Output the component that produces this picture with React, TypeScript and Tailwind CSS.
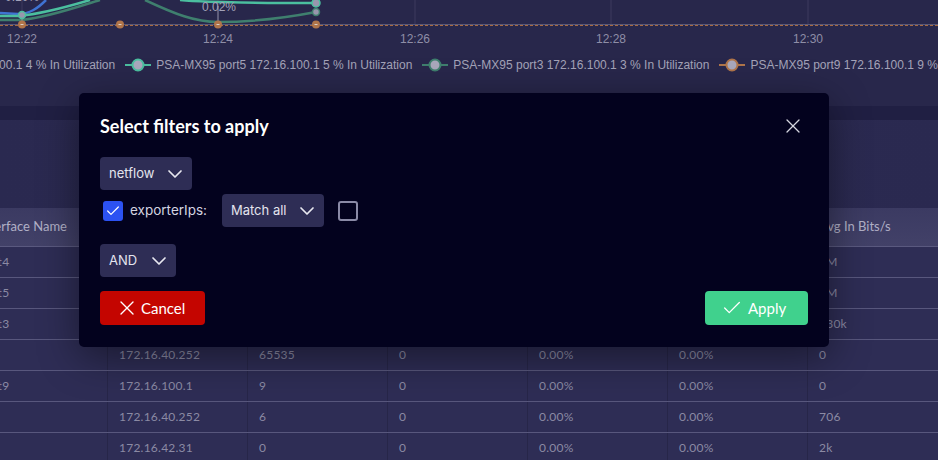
import { Check, ChevronDown, X } from "lucide-react"

const legend = [
  { label: "PSA-MX95 port4 172.16.100.1 4 % In Utilization", color: "#3f73d2" },
  { label: "PSA-MX95 port5 172.16.100.1 5 % In Utilization", color: "#4bbf9f" },
  { label: "PSA-MX95 port3 172.16.100.1 3 % In Utilization", color: "#3f7f6e" },
  { label: "PSA-MX95 port9 172.16.100.1 9 % In Utilization", color: "#b0754a" },
]

const rows = [
  ["port4", "172.16.40.252", "65535", "0", "0.00%", "0.00%", "2M"],
  ["port5", "172.16.100.1", "9", "0", "0.00%", "0.00%", "2M"],
  ["port3", "172.16.40.252", "6", "0", "0.00%", "0.00%", "130k"],
  ["", "172.16.40.252", "65535", "0", "0.00%", "0.00%", "0"],
  ["port9", "172.16.100.1", "9", "0", "0.00%", "0.00%", "0"],
  ["", "172.16.40.252", "6", "0", "0.00%", "0.00%", "706"],
  ["", "172.16.42.31", "0", "0", "0.00%", "0.00%", "2k"],
]

const headers = ["Interface Name", "Exporter IP", "If Index", "In Packets", "In Utilization", "Out Utilization", "Avg In Bits/s"]

function Chart() {
  const xs = [22, 120, 218, 316]
  return (
    <svg width="938" height="50" className="block">
      {[22, 218, 415, 611, 808].map((x) => (
        <line key={x} x1={x} y1="0" x2={x} y2="25" stroke="#3c3b5e" strokeWidth="1" />
      ))}
      <line x1="0" y1="24.5" x2="938" y2="24.5" stroke="#5a5978" strokeWidth="1" />
      <line x1="0" y1="25.5" x2="938" y2="25.5" stroke="#a8693f" strokeWidth="1" strokeDasharray="3 2" />
      <path d="M0 13 L18 14 C30 14 38 8 46 0" fill="none" stroke="#3f73d2" strokeWidth="2.5" />
      <path d="M0 16 L18 16 C40 14 70 6 90 0" fill="none" stroke="#4bbf9f" strokeWidth="2.5" />
      <path d="M180 0 C200 2 240 3 316 3" fill="none" stroke="#4bbf9f" strokeWidth="2.5" />
      <path d="M0 20 L22 20 C50 17 80 6 100 0" fill="none" stroke="#3f7f6e" strokeWidth="2.5" />
      <path d="M145 0 C175 14 195 22 218 22 C260 22 290 17 316 12" fill="none" stroke="#3f7f6e" strokeWidth="2.5" />
      <line x1="218" y1="6" x2="218" y2="21" stroke="#8c8ba4" strokeWidth="1" />
      <line x1="22" y1="12" x2="22" y2="21" stroke="#8c8ba4" strokeWidth="1" />
      <text x="202" y="11" fill="#a3a2b9" fontSize="12" fontFamily="Liberation Sans, Arial, sans-serif">0.02%</text>
      <text x="5" y="1" fill="#a3a2b9" fontSize="12" fontFamily="Liberation Sans, Arial, sans-serif">0.10%</text>
      <circle cx="22" cy="15" r="3.5" fill="#9796ad" stroke="#4bbf9f" strokeWidth="1.5" />
      <circle cx="316" cy="3" r="4" fill="#9796ad" stroke="#4bbf9f" strokeWidth="1.5" />
      <circle cx="316" cy="12" r="3.5" fill="#9796ad" stroke="#3f7f6e" strokeWidth="1.5" />
      {xs.map((x) => (
        <g key={x}>
          <circle cx={x} cy="24.5" r="4" fill="#b0754a" />
          <line x1={x - 1.5} y1="24.5" x2={x + 1.5} y2="24.5" stroke="#d8cfc8" strokeWidth="1" />
        </g>
      ))}
      {[
        [22, "12:22"],
        [218, "12:24"],
        [415, "12:26"],
        [611, "12:28"],
        [808, "12:30"],
      ].map(([x, t]) => (
        <text
          key={t}
          x={x}
          y="43"
          textAnchor="middle"
          fill="#8f8ea7"
          fontSize="12"
          fontFamily="Liberation Sans, Arial, sans-serif"
        >
          {t}
        </text>
      ))}
    </svg>
  )
}

function Select({ label, width }: { label: string; width: string }) {
  return (
    <div
      className={`flex h-[33px] ${width} items-center justify-between rounded-[4px] bg-[#2e2d55] pl-[9px] pr-[5px] text-[13px] text-[#e4e4ee]`}
    >
      <span>{label}</span>
      <ChevronDown className="h-6 w-6 text-[#e8e8f0]" strokeWidth={1.7} />
    </div>
  )
}

export default function App() {
  return (
    <div className="relative h-[460px] w-[938px] overflow-hidden bg-[#28274b] font-['Lato',sans-serif]">
      {/* chart */}
      <div className="h-[106px]">
        <Chart />
        <div className="ml-[-172px] mt-[6px] flex items-center gap-[10px] whitespace-nowrap font-['Liberation_Sans',Arial,sans-serif] text-[12px] text-[#a4a3b8]">
          {legend.map((l) => (
            <div key={l.label} className="flex items-center gap-[5px]">
              <svg width="26" height="14">
                <line x1="0" y1="7" x2="26" y2="7" stroke={l.color} strokeWidth="2" />
                <circle cx="13" cy="7" r="5.5" fill="#a9a8bc" stroke={l.color} strokeWidth="2" />
              </svg>
              <span>{l.label}</span>
            </div>
          ))}
        </div>
      </div>
      <div className="h-[14px] bg-[#201f43]" />

      {/* table card */}
      <div className="bg-[#2b2a51]">
        <div className="h-[88px] bg-gradient-to-r from-[#2a2950] via-[#2c2b52] to-[#2a2950]" />
        <div className="ml-[-32px]">
          <div className="flex h-[39px] items-center border-b border-[#5a597f] bg-gradient-to-b from-[#3b3a62] to-[#424168] text-[13px] text-[#b1b0c6]">
            {headers.map((h) => (
              <div key={h} className="w-[140px] shrink-0 px-[11px] whitespace-nowrap">
                {h}
              </div>
            ))}
          </div>
          {rows.map((r, i) => (
            <div key={i} className="flex h-[31px] border-b border-[#58577d] bg-[#2e2d55] text-[12px] text-[#8b8aa4]">
              {r.map((c, j) => (
                <div
                  key={j}
                  className="flex w-[140px] shrink-0 items-center border-r border-[#272649] px-[11px] tracking-[0.02em] whitespace-nowrap"
                >
                  {c}
                </div>
              ))}
            </div>
          ))}
        </div>
      </div>

      {/* modal */}
      <div className="absolute inset-0">
        <div className="absolute left-[79px] top-[93px] w-[750px] rounded-[5px] bg-[#03021e] px-[21px] pb-[22px] pt-[21px] shadow-[0_10px_40px_rgba(0,0,0,0.45)]">
          <div className="flex items-center justify-between">
            <h2 className="text-[18px] leading-6 font-bold text-white">Select filters to apply</h2>
            <X className="mr-[3px] h-6 w-6 text-[#d6d6e0]" strokeWidth={1.3} />
          </div>

          <div className="mt-[19px] flex flex-col gap-[4px] font-['Inter',sans-serif]">
            <Select label="netflow" width="w-[92px]" />
            <div className="flex items-center">
              <div className="ml-[3px] flex h-[20px] w-[20px] items-center justify-center rounded-[3px] bg-[#2c52f2]">
                <Check className="h-[16px] w-[16px] text-white" strokeWidth={1.8} />
              </div>
              <span className="ml-[7px] text-[13.5px] text-[#d4d4e0]">exporterIps:</span>
              <div className="ml-[15px]">
                <Select label="Match all" width="w-[102px]" />
              </div>
              <div className="ml-[14px] h-[20px] w-[20px] rounded-[3px] border-2 border-[#8a8aa6]" />
            </div>
          </div>

          <div className="mt-[17px] font-['Inter',sans-serif]">
            <Select label="AND" width="w-[76px]" />
          </div>

          <div className="mt-[14px] flex items-center justify-between">
            <button className="flex h-[34px] w-[105px] items-center gap-[2px] rounded-[4px] bg-[#c40500] pl-[15px] text-[15px] text-white">
              <X className="h-6 w-6" strokeWidth={1.4} />
              Cancel
            </button>
            <button className="flex h-[34px] w-[103px] items-center gap-[5px] rounded-[4px] bg-[#40d18d] pl-[16px] text-[15px] text-white">
              <Check className="h-[22px] w-[22px]" strokeWidth={1.4} />
              Apply
            </button>
          </div>
        </div>
      </div>
    </div>
  )
}
